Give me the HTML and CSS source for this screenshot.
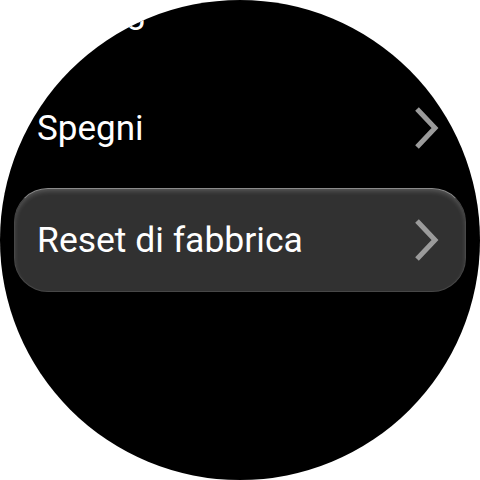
FILE: index.html
```html
<!DOCTYPE html>
<html lang="it">
<head>
  <meta charset="UTF-8">
  <meta name="viewport" content="width=device-width, initial-scale=1.0">
  <title>Impostazioni</title>
  <link rel="stylesheet" href="styles.css">
</head>
<body>
  <!-- Watch face -->
  <div class="watch">
    <ul class="menu">
      <li class="menu-item menu-item--first">
        <span class="menu-label">Pairing</span>
        <svg class="chevron" viewBox="0 0 26 44" width="26" height="44"><polyline points="4,3 22,22 4,41"/></svg>
      </li>
      <li class="menu-item">
        <span class="menu-label">Spegni</span>
        <svg class="chevron" viewBox="0 0 26 44" width="26" height="44"><polyline points="4,3 22,22 4,41"/></svg>
      </li>
      <li class="menu-item menu-item--active">
        <span class="menu-label">Reset di fabbrica</span>
        <svg class="chevron" viewBox="0 0 26 44" width="26" height="44"><polyline points="4,3 22,22 4,41"/></svg>
      </li>
    </ul>
  </div>
</body>
</html>
```

FILE: styles.css
```css
* {
  margin: 0;
  padding: 0;
  box-sizing: border-box;
}

body {
  width: 480px;
  height: 480px;
  background-color: #fff;
  font-family: Roboto, 'Noto Sans', sans-serif;
  overflow: hidden;
}

/* Round screen */
.watch {
  width: 480px;
  height: 480px;
  border-radius: 50%;
  background-color: #000;
  overflow: hidden;
}

.menu {
  list-style: none;
  margin-top: -41px;
  padding: 0 14px;
  display: flex;
  flex-direction: column;
  gap: 8px;
}

.menu-item {
  height: 104px;
  display: flex;
  align-items: center;
  justify-content: space-between;
  padding: 0 26px 0 22px;
  border: 1px solid transparent;
  border-radius: 34px;
  color: #fff;
}

.menu-item--first {
  margin-bottom: 5px;
}

.menu-label {
  font-size: 35px;
  line-height: 1;
  padding-top: 1px;
}

.menu-item--active .menu-label {
  font-size: 35.5px;
}

.menu-item--active {
  background-color: #313131;
  border-color: #474747;
  border-top-color: #8a8a8a;
  box-shadow: inset 0 3px 5px -1px rgba(255, 255, 255, 0.2);
}

.chevron {
  flex-shrink: 0;
}

.chevron polyline {
  fill: none;
  stroke: #9b9b9b;
  stroke-width: 5;
}
```
